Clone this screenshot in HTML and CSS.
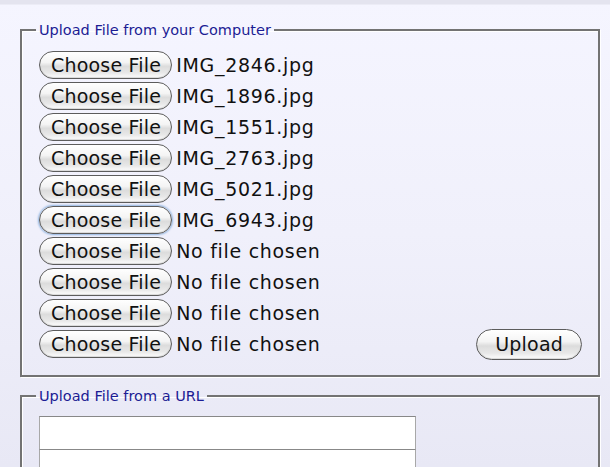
FILE: index.html
```html
<!DOCTYPE html>
<html>
<head>
<meta charset="utf-8">
<link rel="stylesheet" href="styles.css">
</head>
<body>
<div class="topstrip"></div>
<div class="page">
  <fieldset class="box">
    <legend>Upload File from your Computer</legend>
    <div class="rows">
      <div class="row"><button class="choose">Choose File</button><span class="fname">IMG_2846.jpg</span></div>
      <div class="row"><button class="choose">Choose File</button><span class="fname">IMG_1896.jpg</span></div>
      <div class="row"><button class="choose">Choose File</button><span class="fname">IMG_1551.jpg</span></div>
      <div class="row"><button class="choose">Choose File</button><span class="fname">IMG_2763.jpg</span></div>
      <div class="row"><button class="choose">Choose File</button><span class="fname">IMG_5021.jpg</span></div>
      <div class="row"><button class="choose focus">Choose File</button><span class="fname">IMG_6943.jpg</span></div>
      <div class="row"><button class="choose">Choose File</button><span class="fname">No file chosen</span></div>
      <div class="row"><button class="choose">Choose File</button><span class="fname">No file chosen</span></div>
      <div class="row"><button class="choose">Choose File</button><span class="fname">No file chosen</span></div>
      <div class="row"><button class="choose">Choose File</button><span class="fname">No file chosen</span><button class="upload">Upload</button></div>
    </div>
  </fieldset>
  <fieldset class="box url">
    <legend>Upload File from a URL</legend>
    <div class="inputs">
      <input type="text" class="urlinput">
      <input type="text" class="urlinput">
    </div>
  </fieldset>
</div>
</body>
</html>
```
FILE: styles.css
```css
html, body {
  margin: 0;
  padding: 0;
  height: 100%;
  overflow: hidden;
}
body {
  background: linear-gradient(#f5f5ff 0%, #f0f0fb 50%, #e8e8f5 100%);
  font-family: "DejaVu Sans", Verdana, sans-serif;
}
.topstrip {
  height: 4px;
  background: #e4e4ef;
  border-bottom: 1px solid #ececf6;
}
.page {
  padding: 17px 10px 0 20px;
}
.box {
  margin: 0;
  border: 2px solid #737373;
  box-shadow: inset 1px 1px 0 #ffffff, 1px 1px 0 #ffffff;
  padding: 13px 16px 17px 17px;
}
.box legend {
  color: #1c1c94;
  font-size: 14.5px;
  padding: 0 3px;
  margin-left: -3px;
}
.rows {
  display: flex;
  flex-direction: column;
  gap: 3px;
}
.row {
  display: flex;
  align-items: center;
  height: 28px;
}
.choose, .upload {
  font-family: "DejaVu Sans", Verdana, sans-serif;
  font-size: 19px;
  letter-spacing: 0.2px;
  color: #111;
  border: 1px solid #5c5c5c;
  border-radius: 14px;
  background: linear-gradient(#ffffff 0%, #f4f4f4 40%, #dcdcdc 55%, #e8e8e8 80%, #ffffff 100%);
  box-shadow: inset 0 -1px 1px rgba(0,0,0,0.15);
  height: 28px;
  padding: 0 10px 0 11px;
  margin: 0;
}
.choose.focus {
  box-shadow: 0 0 2px 1px #8fb4e0, inset 0 -1px 1px rgba(0,0,0,0.15);
}
.fname {
  font-size: 19px;
  letter-spacing: 0.7px;
  color: #111;
  margin-left: 4px;
}
.upload {
  margin-left: auto;
  height: 31px;
  border-radius: 16px;
  padding: 0 18px;
}
.url {
  margin-top: 11px;
  padding-top: 12px;
}
.inputs {
  display: flex;
  flex-direction: column;
}
.urlinput {
  width: 377px;
  height: 34px;
  box-sizing: border-box;
  border: 1px solid #a8a8a8;
  border-top-color: #888;
  background: #fff;
  margin: 0 0 -1px 0;
  padding: 0;
}
```
